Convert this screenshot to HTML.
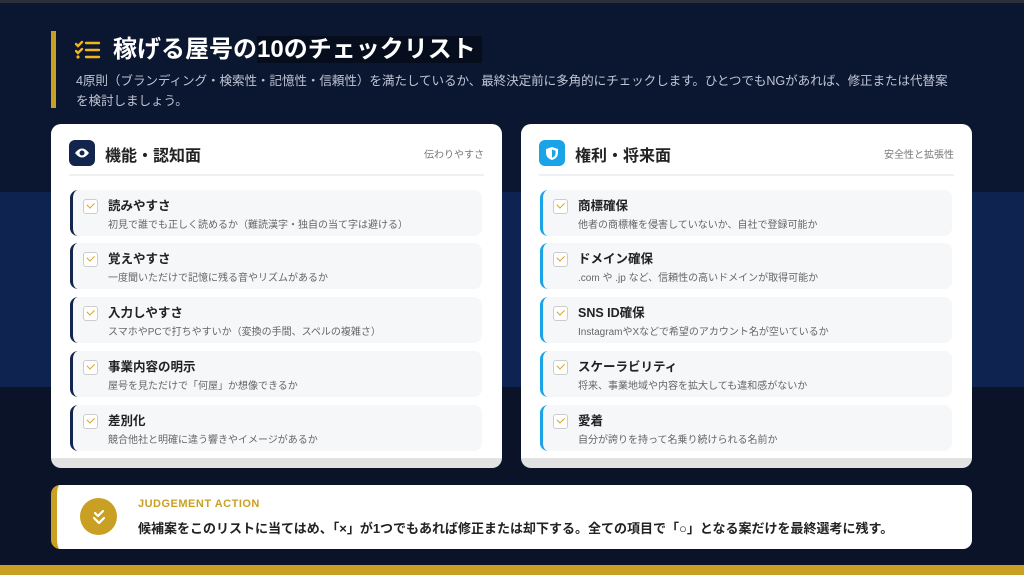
<!DOCTYPE html>
<html><head><meta charset="utf-8"><style>
*{margin:0;padding:0;box-sizing:border-box}
body{width:1024px;height:575px;overflow:hidden;font-family:"Liberation Sans","Noto Sans CJK JP",sans-serif;background:#0b1630;position:relative}
.band{position:absolute;left:0;top:192px;width:1024px;height:195px;background:#0f2350}
.band2{position:absolute;left:0;top:387px;width:1024px;height:188px;background:#0a1328}
.topline{position:absolute;left:0;top:0;width:1024px;height:3px;background:#2a2f3a}
.gold{position:absolute;left:0;top:565px;width:1024px;height:10px;background:#c9a024}
.hbar{position:absolute;left:51px;top:31px;width:5px;height:77px;background:#c9a024}
h1{position:absolute;left:113px;top:34px;font-size:24px;font-weight:bold;color:#fff;line-height:32px}
h1 span{background:#060d1c;padding-right:6px}
.sub{position:absolute;left:76px;top:71px;width:900px;font-size:12.6px;letter-spacing:-0.1px;line-height:20px;color:#bfc5d2}
.card{position:absolute;top:124px;width:451px;height:344px;background:#fff;border-radius:10px;border-bottom:10px solid #e2e2e2}
.ch{position:absolute;left:18px;top:16px;right:18px;height:36px;border-bottom:2px solid #eef0f3}
.ico{position:absolute;left:0;top:0;width:26px;height:26px;border-radius:6px;display:flex;align-items:center;justify-content:center}
.ct{position:absolute;left:36px;top:2px;font-size:16px;font-weight:bold;color:#222}
.cr{position:absolute;right:0;top:6px;font-size:10px;color:#777}
.item{position:absolute;left:19px;width:412px;height:46px;background:#f6f7f9;border-radius:8px;border-left:3px solid #13254d}
.blue .item{border-left-color:#1ba3e8}
.cb{position:absolute;left:10px;top:9px;width:15px;height:15px;border:1px solid #ccc;border-radius:3px;background:#fff}
.cb:after{content:"";position:absolute;left:3px;top:2px;width:6px;height:3.5px;border-left:1.6px solid #d4a520;border-bottom:1.6px solid #d4a520;transform:rotate(-45deg)}
.it{position:absolute;left:35px;top:5px;font-size:12.5px;font-weight:bold;color:#222}
.id{position:absolute;left:35px;top:26px;font-size:10px;color:#666;white-space:nowrap}
.bot{position:absolute;left:51px;top:485px;width:921px;height:64px;background:#fff;border-radius:9px;border-left:6px solid #c9a024}
.circ{position:absolute;left:23px;top:13px;width:37px;height:37px;border-radius:50%;background:#c9a024;display:flex;align-items:center;justify-content:center}
.ja{position:absolute;left:81px;top:13px;font-size:11px;font-weight:bold;color:#c9a024;letter-spacing:.5px}
.jt{position:absolute;left:81px;top:33px;font-size:13px;font-weight:bold;color:#222;white-space:nowrap}
</style></head><body>
<div class="band"></div><div class="band2"></div><div class="topline"></div><div class="gold"></div>
<div class="hbar"></div>
<svg style="position:absolute;left:75px;top:40px" width="26" height="20" viewBox="0 0 26 20"><g stroke="#f0b41c" stroke-width="2.4" fill="none" stroke-linecap="round"><path d="M1 4l2 2 4-4"/><path d="M1 11l2 2 4-4"/><path d="M11 3h13M11 10h13M11 17h13"/></g><circle cx="3" cy="17" r="1.6" fill="#f0b41c"/></svg>
<h1>稼げる屋号の<span>10のチェックリスト</span></h1>
<div class="sub">4原則（ブランディング・検索性・記憶性・信頼性）を満たしているか、最終決定前に多角的にチェックします。ひとつでもNGがあれば、修正または代替案<br>を検討しましょう。</div>

<div class="card" style="left:51px">
<div class="ch"><div class="ico" style="background:#13254d"><svg width="16" height="12" viewBox="0 0 16 12"><path d="M1 6Q8-3 15 6Q8 15 1 6Z" fill="#fff"/><circle cx="8" cy="6" r="2.5" fill="#13254d"/></svg></div><div class="ct">機能・認知面</div><div class="cr">伝わりやすさ</div></div>
<div class="item" style="top:66px"><div class="cb"></div><div class="it">読みやすさ</div><div class="id">初見で誰でも正しく読めるか（難読漢字・独自の当て字は避ける）</div></div>
<div class="item" style="top:119px"><div class="cb"></div><div class="it">覚えやすさ</div><div class="id">一度聞いただけで記憶に残る音やリズムがあるか</div></div>
<div class="item" style="top:173px"><div class="cb"></div><div class="it">入力しやすさ</div><div class="id">スマホやPCで打ちやすいか（変換の手間、スペルの複雑さ）</div></div>
<div class="item" style="top:227px"><div class="cb"></div><div class="it">事業内容の明示</div><div class="id">屋号を見ただけで「何屋」か想像できるか</div></div>
<div class="item" style="top:281px"><div class="cb"></div><div class="it">差別化</div><div class="id">競合他社と明確に違う響きやイメージがあるか</div></div>
</div>

<div class="card blue" style="left:521px">
<div class="ch"><div class="ico" style="background:#1ba3e8"><svg width="14" height="15" viewBox="0 0 14 15"><path d="M7 1L13 3V7Q13 12 7 14Q1 12 1 7V3Z" fill="#fff"/><path d="M7 3.5L10.5 4.7V7.3Q10.5 10.5 7 11.8Z" fill="#1ba3e8"/></svg></div><div class="ct">権利・将来面</div><div class="cr">安全性と拡張性</div></div>
<div class="item" style="top:66px"><div class="cb"></div><div class="it">商標確保</div><div class="id">他者の商標権を侵害していないか、自社で登録可能か</div></div>
<div class="item" style="top:119px"><div class="cb"></div><div class="it">ドメイン確保</div><div class="id">.com や .jp など、信頼性の高いドメインが取得可能か</div></div>
<div class="item" style="top:173px"><div class="cb"></div><div class="it">SNS ID確保</div><div class="id">InstagramやXなどで希望のアカウント名が空いているか</div></div>
<div class="item" style="top:227px"><div class="cb"></div><div class="it">スケーラビリティ</div><div class="id">将来、事業地域や内容を拡大しても違和感がないか</div></div>
<div class="item" style="top:281px"><div class="cb"></div><div class="it">愛着</div><div class="id">自分が誇りを持って名乗り続けられる名前か</div></div>
</div>

<div class="bot"><div class="circ"><svg width="16" height="16" viewBox="0 0 16 16"><g stroke="#fff" stroke-width="2.2" fill="none" stroke-linecap="round" stroke-linejoin="round"><path d="M4 4l3 3 5-5"/><path d="M3 9l5 5 5-5"/></g></svg></div>
<div class="ja">JUDGEMENT ACTION</div>
<div class="jt">候補案をこのリストに当てはめ、「×」が1つでもあれば修正または却下する。全ての項目で「○」となる案だけを最終選考に残す。</div></div>
</body></html>
